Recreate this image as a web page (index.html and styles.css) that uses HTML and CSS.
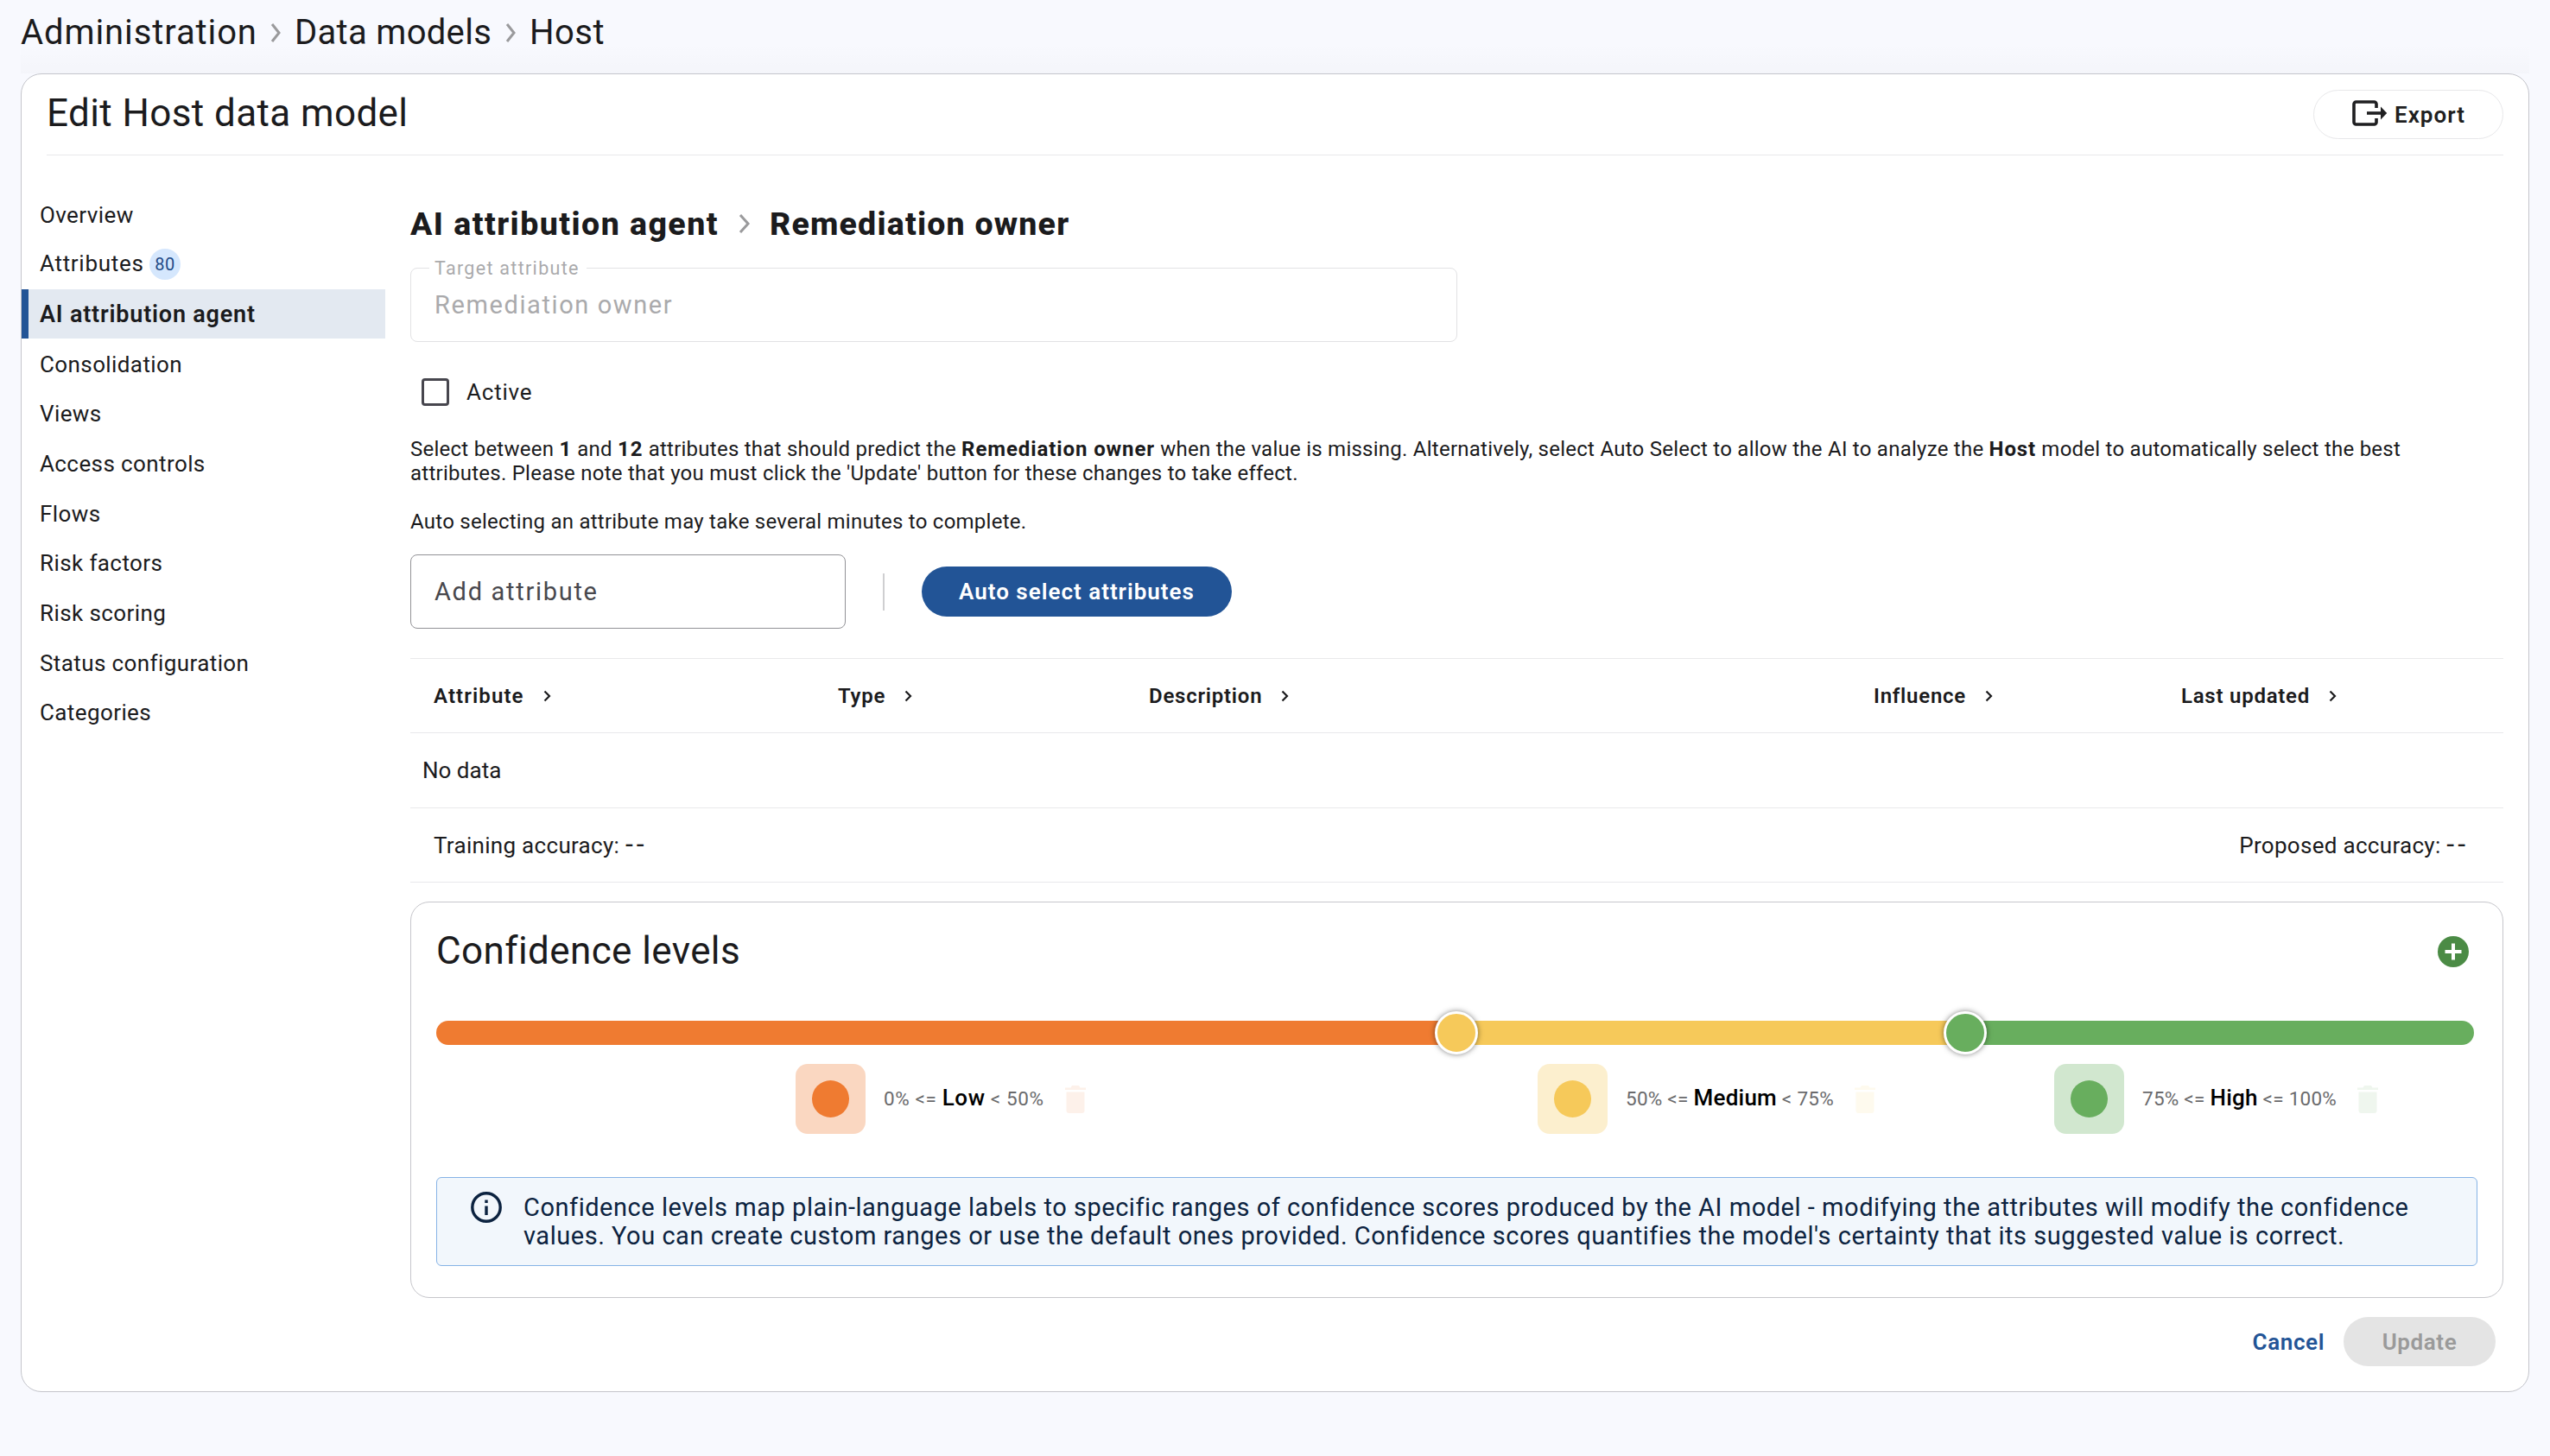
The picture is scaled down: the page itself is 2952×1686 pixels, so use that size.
FILE: index.html
```html
<!DOCTYPE html>
<html lang="en">
<head>
    <meta charset="UTF-8">
    <meta name="viewport" content="width=device-width, initial-scale=1.0">
    <title>Edit Host data model</title>
    <link rel="stylesheet" href="styles.css">
</head>
<body>
    <nav class="breadcrumb">
        <span class="crumb-admin">Administration</span>
        <svg class="crumb-sep" viewBox="0 0 14 24"><path d="M2 2l8 10-8 10"/></svg>
        <span class="crumb-models">Data models</span>
        <svg class="crumb-sep" viewBox="0 0 14 24"><path d="M2 2l8 10-8 10"/></svg>
        <span class="crumb-host">Host</span>
    </nav>

    <main class="page-card">
        <header class="page-header">
            <h1>Edit Host data model</h1>
            <button class="export-button">
                <svg class="export-icon" viewBox="0 0 40 30">
                    <path class="frame" d="M28 9V4.500a2.500 2.500 0 0 0-2.500-2.500H4.500A2.500 2.500 0 0 0 2 4.500v21A2.500 2.500 0 0 0 4.500 28h21a2.500 2.500 0 0 0 2.500-2.500V21"/>
                    <path class="frame" d="M17 15h17"/>
                    <path class="head" d="M33 7.500L40.200 15 33 22.500z"/>
                </svg>
                <span>Export</span>
            </button>
        </header>

        <div class="page-body">
            <ul class="side-nav">
                <li>Overview</li>
                <li class="with-badge"><span>Attributes</span><span class="badge">80</span></li>
                <li class="active">AI attribution agent</li>
                <li>Consolidation</li>
                <li>Views</li>
                <li>Access controls</li>
                <li>Flows</li>
                <li>Risk factors</li>
                <li>Risk scoring</li>
                <li>Status configuration</li>
                <li>Categories</li>
            </ul>

            <section class="content">
                <h2 class="section-title">
                    <span class="title-agent">AI attribution agent</span>
                    <svg class="title-sep" viewBox="0 0 14 24"><path d="M2 2l9 10-9 10"/></svg>
                    <span class="title-owner">Remediation owner</span>
                </h2>

                <div class="field disabled">
                    <span class="field-label">Target attribute</span>
                    <span class="field-value">Remediation owner</span>
                </div>

                <label class="check-row"><span class="checkbox"></span><span>Active</span></label>

                <p class="help-text">Select between <b>1</b> and <b>12</b> attributes that should predict the <b>Remediation owner</b> when the value is missing. Alternatively, select Auto Select to allow the AI to analyze the <b>Host</b> model to automatically select the best<br>attributes. Please note that you must click the 'Update' button for these changes to take effect.<br><br>Auto selecting an attribute may take several minutes to complete.</p>

                <div class="select-row">
                    <div class="field add-field"><span class="field-value">Add attribute</span></div>
                    <div class="divider"></div>
                    <button class="primary-button">Auto select attributes</button>
                </div>

                <div class="table">
                    <div class="table-row table-head">
                        <span>Attribute <svg viewBox="0 0 9 14"><path d="M1.500 1.500L7 7l-5.500 5.500"/></svg></span>
                        <span>Type <svg viewBox="0 0 9 14"><path d="M1.500 1.500L7 7l-5.500 5.500"/></svg></span>
                        <span>Description <svg viewBox="0 0 9 14"><path d="M1.500 1.500L7 7l-5.500 5.500"/></svg></span>
                        <span>Influence <svg viewBox="0 0 9 14"><path d="M1.500 1.500L7 7l-5.500 5.500"/></svg></span>
                        <span>Last updated <svg viewBox="0 0 9 14"><path d="M1.500 1.500L7 7l-5.500 5.500"/></svg></span>
                    </div>
                    <div class="table-row table-empty">No data</div>
                    <div class="table-row table-foot">
                        <span>Training accuracy: <span class="dashes">--</span></span>
                        <span>Proposed accuracy: <span class="dashes">--</span></span>
                    </div>
                </div>

                <div class="confidence">
                    <div class="confidence-header">
                        <h3>Confidence levels</h3>
                        <svg class="add-icon" viewBox="0 0 36 36"><circle cx="18" cy="18" r="18"/><path d="M18 8.500v19M8.500 18h19"/></svg>
                    </div>

                    <div class="slider">
                        <div class="segment low" style="width: 50%"></div>
                        <div class="segment medium" style="width: 25%"></div>
                        <div class="segment high" style="width: 25%"></div>
                        <span class="thumb medium" style="left: 50.075%"></span>
                        <span class="thumb high" style="left: 75.037%"></span>
                    </div>

                    <div class="legend">
                        <div class="level level-low">
                            <span class="swatch"><i></i></span>
                            <span class="range">0% &lt;= <b>Low</b> &lt; 50%</span>
                            <svg class="trash" viewBox="0 0 26 32"><path d="M1 2.500h6.500L9 0h8l1.500 2.500H25V5H1zM2.500 7.500h21V29a3 3 0 0 1-3 3h-15a3 3 0 0 1-3-3z"/></svg>
                        </div>
                        <div class="level level-medium">
                            <span class="swatch"><i></i></span>
                            <span class="range">50% &lt;= <b>Medium</b> &lt; 75%</span>
                            <svg class="trash" viewBox="0 0 26 32"><path d="M1 2.500h6.500L9 0h8l1.500 2.500H25V5H1zM2.500 7.500h21V29a3 3 0 0 1-3 3h-15a3 3 0 0 1-3-3z"/></svg>
                        </div>
                        <div class="level level-high">
                            <span class="swatch"><i></i></span>
                            <span class="range">75% &lt;= <b>High</b> &lt;= 100%</span>
                            <svg class="trash" viewBox="0 0 26 32"><path d="M1 2.500h6.500L9 0h8l1.500 2.500H25V5H1zM2.500 7.500h21V29a3 3 0 0 1-3 3h-15a3 3 0 0 1-3-3z"/></svg>
                        </div>
                    </div>

                    <div class="info">
                        <svg class="info-icon" viewBox="0 0 36 36"><circle cx="18" cy="18" r="16.200"/><path d="M18 16.500V27M18 9.500v3.600"/></svg>
                        <p>Confidence levels map plain-language labels to specific ranges of confidence scores produced by the AI model - modifying the attributes will modify the confidence<br>values. You can create custom ranges or use the default ones provided. Confidence scores quantifies the model's certainty that its suggested value is correct.</p>
                    </div>
                </div>

                <div class="actions">
                    <button class="cancel-button">Cancel</button>
                    <button class="update-button" disabled>Update</button>
                </div>
            </section>
        </div>
    </main>
</body>
</html>
```

FILE: styles.css
```css
* {
    box-sizing: border-box;
}

body {
    margin: 0;
    min-height: 100vh;
    background-color: #f8f9fe;
    color: #1b1b1d;
    font-family: Roboto, "Liberation Sans", sans-serif;
    font-size: 26px;
    white-space: nowrap;
}

h1, h2, h3, p, ul {
    margin: 0;
    padding: 0;
    font-weight: 400;
}

button {
    font-family: inherit;
    font-size: 26px;
    font-weight: 600;
    letter-spacing: 0.6px;
    padding: 0;
    border: none;
    white-space: nowrap;
}

svg {
    display: block;
    fill: none;
    flex: none;
}

.breadcrumb {
    display: flex;
    align-items: center;
    height: 85px;
    margin: 0 24px;
    padding: 0 0 10px;
    font-size: 40px;
    letter-spacing: 0.5px;
    background: linear-gradient(rgba(0, 0, 0, 0) 60%, rgba(0, 0, 0, 0.015));
}

.crumb-admin {
    width: 289px;
    letter-spacing: 0.9px;
}

.crumb-models {
    width: 244px;
    letter-spacing: 0.3px;
}

.crumb-sep {
    width: 14px;
    height: 24px;
    margin-right: 14px;
    stroke: #9a9a9c;
    stroke-width: 3;
}

.page-card {
    height: 1527px;
    margin: 0 24px;
    background-color: #fff;
    border: 1px solid #c4c5cb;
    border-radius: 24px;
}

.page-header {
    display: flex;
    align-items: center;
    justify-content: space-between;
    height: 94px;
    margin: 0 29px;
    border-bottom: 1px solid #e8e8ea;
}

h1 {
    font-size: 44px;
    letter-spacing: 0.4px;
    padding-bottom: 3px;
}

.export-button {
    display: flex;
    align-items: center;
    width: 220px;
    height: 57px;
    padding-left: 44px;
    gap: 9px;
    background-color: #fff;
    border: 1px solid #e8e8ea;
    border-radius: 29px;
    color: #1f1f21;
    letter-spacing: 1px;
}

.export-icon {
    width: 40px;
    height: 30px;
    margin-bottom: 3px;
    overflow: visible;
}

.export-icon .frame {
    stroke: #1f1f21;
    stroke-width: 3.6;
}

.export-icon .head {
    fill: #1f1f21;
}

.page-body {
    display: flex;
}

.side-nav {
    display: flex;
    flex-direction: column;
    gap: 0.7px;
    width: 421px;
    padding-top: 40px;
    list-style: none;
    flex: none;
    letter-spacing: 0.4px;
}

.side-nav li {
    display: flex;
    align-items: center;
    height: 57px;
    padding-left: 21px;
}

.side-nav li.active {
    padding-left: 13px;
    border-left: 8px solid #225496;
    background-color: #e3e9f1;
    font-size: 27px;
    font-weight: 600;
    letter-spacing: 0.8px;
}

.with-badge span:first-child {
    width: 127px;
    padding-bottom: 3px;
    letter-spacing: 0.7px;
}

.badge {
    display: flex;
    align-items: center;
    justify-content: center;
    width: 36px;
    height: 36px;
    border-radius: 50%;
    background-color: #d5e7fd;
    color: #1f4b87;
    font-size: 20px;
}

.content {
    flex: 1;
    margin: 57px 29px 0;
}

.section-title {
    display: flex;
    align-items: center;
    height: 44px;
    font-size: 37.500px;
    font-weight: 800;
    letter-spacing: 1.2px;
}

.title-agent {
    width: 380px;
    letter-spacing: 1.450px;
}

.title-sep {
    width: 14px;
    height: 24px;
    margin-right: 22px;
    stroke: #9a9a9c;
    stroke-width: 3;
}

.field {
    display: flex;
    align-items: center;
    position: relative;
    width: 1212px;
    height: 86px;
    padding-left: 27px;
    border: 1px solid #929296;
    border-radius: 8px;
}

.field.disabled {
    margin-top: 29px;
    border-color: #e2e2e4;
    color: #aaaaac;
}

.field-value {
    font-size: 29px;
    letter-spacing: 1.6px;
}

.field-label {
    position: absolute;
    top: -13px;
    left: 21px;
    padding: 0 8px 0 6px;
    background-color: #fff;
    font-size: 21.500px;
    line-height: 26px;
    letter-spacing: 1.3px;
}

.check-row {
    display: flex;
    align-items: center;
    height: 32px;
    margin: 42px 0 0 13px;
    gap: 20px;
    letter-spacing: 0.8px;
}

.checkbox {
    width: 32px;
    height: 32px;
    border: 3px solid #47464e;
    border-radius: 4px;
}

.help-text {
    margin-top: 36px;
    font-size: 24px;
    line-height: 28px;
    letter-spacing: 0.25px;
}

.help-text b {
    letter-spacing: 0.9px;
}

.select-row {
    display: flex;
    align-items: center;
    margin-top: 24px;
}

.add-field {
    width: 504px;
    color: #48484d;
}

.add-field .field-value {
    letter-spacing: 1.7px;
}

.divider {
    width: 2px;
    height: 43px;
    margin: 0 43px;
    background-color: #cfcfd1;
}

.primary-button {
    width: 359px;
    height: 58px;
    border-radius: 29px;
    background-color: #225496;
    color: #fff;
    letter-spacing: 1px;
}

.table {
    margin-top: 34px;
    border-bottom: 1px solid #e9e9eb;
}

.table-row {
    display: flex;
    align-items: center;
    height: 86px;
    border-top: 1px solid #e9e9eb;
}

.table-head {
    display: grid;
    grid-template-columns: 468px 360px 839px 356px 1fr;
    padding-left: 27px;
    font-size: 24px;
    font-weight: 600;
    letter-spacing: 0.75px;
}

.table-head > span {
    display: flex;
    align-items: center;
    gap: 22px;
}

.table-head > span:first-child {
    letter-spacing: 1.1px;
}

.table-head svg {
    width: 9px;
    height: 14px;
    stroke: #1b1b1d;
    stroke-width: 2.2;
}

.table-empty {
    height: 87px;
    padding-left: 14px;
}

.table-foot {
    justify-content: space-between;
    padding: 0 40px 0 27px;
    letter-spacing: 0.3px;
}

.dashes {
    font-size: 32px;
    line-height: 26px;
    letter-spacing: 4px;
}

.confidence {
    height: 459px;
    margin-top: 22px;
    padding: 29px 29px 0;
    border: 1px solid #c6c6cb;
    border-radius: 22px;
}

.confidence-header {
    display: flex;
    align-items: center;
    justify-content: space-between;
    height: 54px;
    padding-right: 10px;
}

h3 {
    font-size: 44px;
    letter-spacing: 0.4px;
}

.add-icon {
    width: 36px;
    height: 36px;
    margin-top: 2px;
}

.add-icon circle {
    fill: #4b8b45;
}

.add-icon path {
    stroke: #fff;
    stroke-width: 4;
}

.slider {
    display: flex;
    position: relative;
    height: 28px;
    margin: 54px 4px 0 0;
}

.segment:first-child {
    border-radius: 14px 0 0 14px;
}

.segment.high {
    border-radius: 0 14px 14px 0;
}

.low {
    background-color: #ef7b31;
}

.medium {
    background-color: #f6c95a;
}

.high {
    background-color: #68ae5e;
}

.thumb {
    position: absolute;
    top: -11px;
    width: 50px;
    height: 50px;
    margin-left: -25px;
    border: 3px solid #fff;
    border-radius: 50%;
    box-shadow: 0 0 6px rgba(0, 0, 0, 0.5);
}

.legend {
    display: grid;
    grid-template-columns: 859px 598px 1fr;
    margin-top: 22px;
    padding-left: 416px;
}

.level {
    display: flex;
    align-items: center;
}

.swatch {
    display: flex;
    align-items: center;
    justify-content: center;
    width: 81px;
    height: 81px;
    margin-right: 21px;
    border-radius: 14px;
}

.swatch i {
    width: 43px;
    height: 43px;
    border-radius: 50%;
}

.range {
    padding-bottom: 3px;
    color: #6a6a6c;
    font-size: 22.500px;
    letter-spacing: 0.25px;
}

.level-low .range {
    letter-spacing: 0.6px;
}

.range b {
    color: #000;
    font-size: 26px;
    font-weight: 500;
}

.trash {
    width: 26px;
    height: 32px;
    margin-left: 23px;
}

.level-low .swatch {
    background-color: #fad7c1;
}

.level-low i {
    background-color: #ef7b31;
}

.level-low .trash {
    fill: #fdf1ea;
}

.level-medium .swatch {
    background-color: #fcefce;
}

.level-medium i {
    background-color: #f6c95a;
}

.level-medium .trash {
    fill: #fefaee;
}

.level-high .swatch {
    background-color: #d1e7cf;
}

.level-high i {
    background-color: #68ae5e;
}

.level-high .trash {
    fill: #eff6ee;
}

.info {
    display: flex;
    height: 103px;
    margin-top: 50px;
    padding: 16px 0 0 39px;
    gap: 25px;
    background-color: #f2f7fc;
    border: 1px solid #86b3e6;
    border-radius: 6px;
    color: #0c2340;
}

.info-icon {
    width: 36px;
    height: 36px;
    stroke: #0c2340;
    stroke-width: 3.4;
}

.info p {
    padding-top: 2px;
    font-size: 29px;
    line-height: 33px;
    letter-spacing: 0.53px;
}

.actions {
    display: flex;
    align-items: center;
    justify-content: flex-end;
    margin-top: 22px;
    padding-right: 9px;
}

.cancel-button {
    margin-right: 22px;
    background: none;
    color: #225496;
}

.update-button {
    width: 176px;
    height: 57px;
    border-radius: 29px;
    background-color: #e4e4e4;
    color: #9a9a9a;
}
```
